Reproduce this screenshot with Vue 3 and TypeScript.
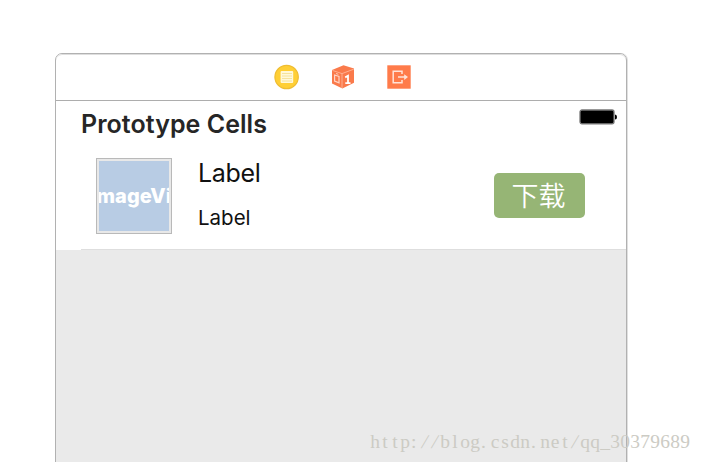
<script setup lang="ts">
const sectionTitle: string = 'Prototype Cells'
const cell = { title: 'Label', subtitle: 'Label', image: 'mageVi', action: '下载' }
const watermark: string[] = [...'http://blog.csdn.net/qq_30379689']
const isStop = (ch: string): boolean => ch === '.' || ch === ':'
</script>

<template>
  <main class="canvas">
    <section class="scene">
      <header class="dock">
        <svg class="icon" viewBox="0 0 26 26">
          <circle cx="12.6" cy="13" r="11.7" fill="#ffcf35" stroke="#efbd32" stroke-width="1.2" />
          <rect x="6.6" y="7" width="12.6" height="12" rx="1" fill="#fff8d9" />
          <path d="M8 9.5h10M8 12h10M8 14.5h10M8 17h10" stroke="#f4dc8c" stroke-width=".8" />
        </svg>
        <svg class="icon" viewBox="0 0 26 26">
          <path d="M13.5 1.3 24 4.6v14.2L12.4 24.5 2 19.6V6Z" fill="#fa7a4b" />
          <path d="M2.4 6.4 12 9.6 23.8 5.2M12 9.6V24" fill="none" stroke="#ffb496" stroke-width=".9" />
          <path d="M4.6 11 9 12.5v6.3L4.6 17Z" fill="none" stroke="#ffd5c5" stroke-width="1.2" />
          <path d="M6 9.5l2.4.8" fill="none" stroke="#ffd5c5" stroke-width=".9" />
          <path d="M15.2 13.4 18 11.8V19.2M15.3 19.2h5.2" fill="none" stroke="#fff" stroke-width="1.8" />
        </svg>
        <svg class="icon" viewBox="0 0 26 26">
          <rect x="1.3" y="1.3" width="23.4" height="23.4" fill="#ff7b4a" />
          <path d="M16 10V7.3H7.2v11.4H16v-2.6M12 13.1h7" fill="none" stroke="#ffe3d8" stroke-width="1.5" />
          <path d="m18.2 10.2 3.8 2.9-3.8 2.9Z" fill="#ffe3d8" />
        </svg>
      </header>
      <div class="table-head">
        <h1>{{ sectionTitle }}</h1>
        <svg class="battery" viewBox="0 0 39 16">
          <rect x="1" y="1" width="34" height="13.8" rx="2" fill="#000" stroke="#777" stroke-width="1.3" />
          <path d="M36 5.5q2 0 2 2.5t-2 2.5Z" fill="#000" />
        </svg>
      </div>
      <div class="cell">
        <div class="thumb"><span>{{ cell.image }}</span></div>
        <div class="labels">
          <div class="title">{{ cell.title }}</div>
          <div class="subtitle">{{ cell.subtitle }}</div>
        </div>
        <button class="download">{{ cell.action }}</button>
      </div>
      <div class="empty"></div>
    </section>
    <div class="watermark">
      <span v-for="(ch, i) in watermark" :key="i" :class="{ stop: isStop(ch), slash: ch === '/' }">{{ ch }}</span>
    </div>
  </main>
</template>

<style>
body { background: #fff; overflow: hidden; }
</style>

<style scoped>
* { box-sizing: border-box; }
.canvas {
  position: relative;
  width: 702px;
  height: 462px;
  padding: 53px 0 0 55px;
  overflow: hidden;
  font-family: Inter, "Noto Sans CJK SC", sans-serif;
}
.scene {
  width: 572px;
  height: 430px;
  border: 1px solid #b1b1b1;
  border-radius: 7px;
  box-shadow: 1px 0 0 #e0e0e0;
  overflow: hidden;
  display: flex;
  flex-direction: column;
}
.dock {
  height: 47px;
  flex: none;
  border-bottom: 1px solid #adadad;
  border-radius: 6px 6px 0 0;
  box-shadow: inset 0 1px 0 #dedede;
  display: flex;
  justify-content: center;
  align-items: center;
  gap: 30px;
  padding-left: 4px;
}
.icon { width: 26px; height: 26px; }
.table-head {
  height: 49px;
  flex: none;
  display: flex;
  justify-content: space-between;
  padding: 8px 8px 0 25px;
}
h1 {
  margin: 0;
  font-size: 25px;
  line-height: 30px;
  font-weight: 600;
  color: #262626;
  letter-spacing: .04px;
}
.battery { width: 39px; height: 16px; }
.cell {
  height: 100px;
  flex: none;
  margin-left: 25px;
  border-bottom: 1px solid #dedede;
  display: flex;
  align-items: flex-start;
  padding: 8px 41px 0 15px;
}
.thumb {
  width: 76px;
  height: 76px;
  flex: none;
  border: 1px solid #b9b9b9;
  outline: 2px solid #e8e8e8;
  outline-offset: -3px;
  background: #b8cce4;
  color: #fff;
  display: flex;
  align-items: center;
  justify-content: center;
  font-size: 20px;
  font-weight: 800;
  overflow: hidden;
}
.labels { margin-left: 26px; flex: 1; color: #111; }
.title { font-size: 25px; line-height: 30px; letter-spacing: -.3px; }
.subtitle { margin-top: 17px; font-size: 20.5px; line-height: 25px; }
.download {
  width: 91px;
  height: 45px;
  margin-top: 15px;
  padding: 0 2px 2px 0;
  border: 0;
  border-radius: 5px;
  background: #96b575;
  color: #fff;
  font-family: "Noto Sans CJK SC", sans-serif;
  font-size: 27px;
  font-weight: 350;
  line-height: 43px;
}
.empty { flex: 1; background: #eaeaea; }
.watermark {
  position: absolute;
  left: 370px;
  top: 431px;
  display: flex;
  font-family: "Liberation Serif", serif;
  font-size: 19.5px;
  line-height: 22px;
  color: #cccbc4;
}
.watermark span { width: 10px; display: flex; justify-content: center; }
.watermark .stop { justify-content: flex-start; padding-left: 1px; }
.watermark .slash { transform: skewX(-14deg); }
</style>
